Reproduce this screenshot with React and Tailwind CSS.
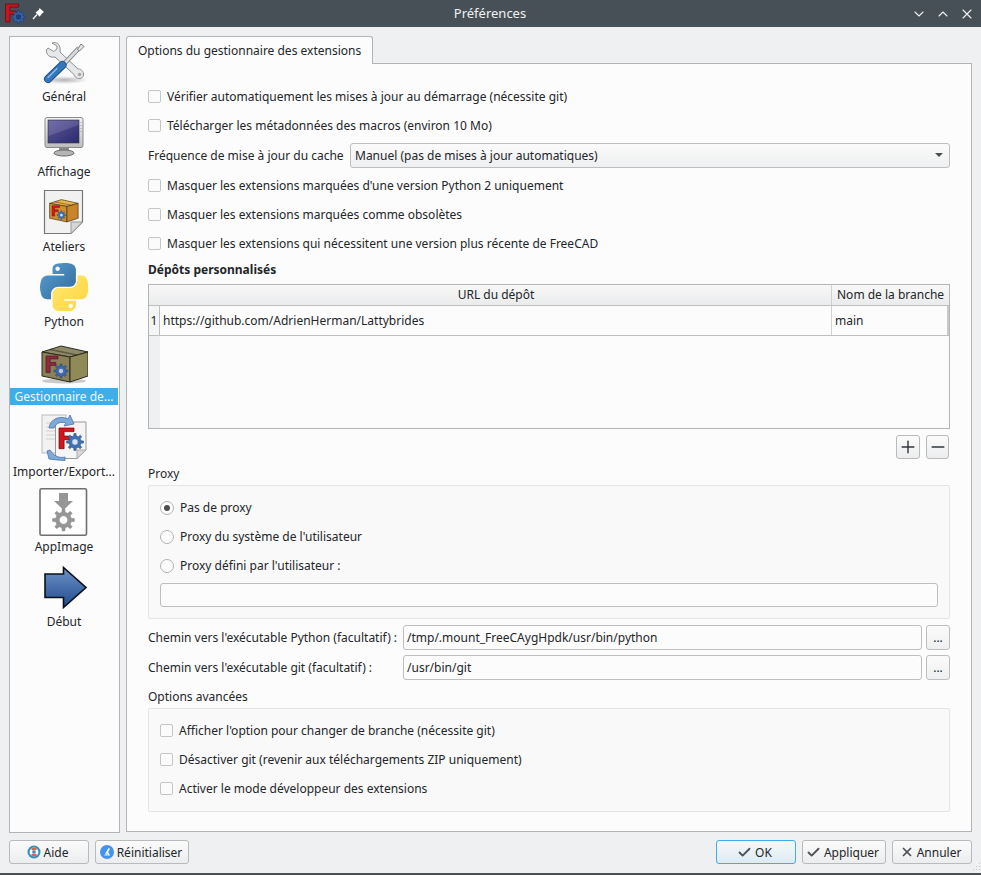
import React from "react"
import { ChevronDown, ChevronUp, X, Check, Plus, Minus } from "lucide-react"

// gear outline, computed so every icon shares the same teeth
function gearPath(cx, cy, outer, inner, teeth) {
  let d = ""
  const step = (Math.PI * 2) / teeth
  for (let i = 0; i < teeth; i++) {
    const a = i * step
    const pts = [
      [inner, a - step * 0.5],
      [inner, a - step * 0.27],
      [outer, a - step * 0.16],
      [outer, a + step * 0.16],
      [inner, a + step * 0.27],
    ]
    pts.forEach(([r, t], j) => {
      const x = (cx + r * Math.cos(t)).toFixed(2)
      const y = (cy + r * Math.sin(t)).toFixed(2)
      d += (i === 0 && j === 0 ? "M" : "L") + x + " " + y + " "
    })
  }
  return d + "Z"
}

function Gear({ cx, cy, r, fill = "#3f73b8", stroke = "#1f3f75", hole = "#d5e2f3" }) {
  return (
    <g>
      <path d={gearPath(cx, cy, r, r * 0.72, 8)} fill={fill} stroke={stroke} strokeWidth="0.5" />
      <circle cx={cx} cy={cy} r={r * 0.38} fill={hole} stroke={stroke} strokeWidth="0.5" />
    </g>
  )
}

function LogoF({ x, y, s, fill = "#d9141e", stroke = "#5a0c10" }) {
  return (
    <path
      d={`M${x} ${y}h${s}v${s * 0.24}h${-s * 0.66}v${s * 0.3}h${s * 0.48}v${s * 0.24}h${-s * 0.48}v${s * 0.6}h${-s * 0.34}z`}
      fill={fill}
      stroke={stroke}
      strokeWidth="0.7"
    />
  )
}

function ToolsIcon() {
  return (
    <svg width="48" height="48" viewBox="0 0 48 48">
      <defs>
        <radialGradient id="toolShadow"><stop offset="0" stopColor="#777" stopOpacity="0.55" /><stop offset="1" stopColor="#777" stopOpacity="0" /></radialGradient>
      </defs>
      <ellipse cx="24" cy="42" rx="24" ry="4" fill="url(#toolShadow)" />
      {/* wrench */}
      <path d="M12 5 L17 8 L17 11 L13.5 13.5 L8 10 L6.5 12 C6 17 10 20 15 19 L34 36.5 C35 42 44 42 43.5 36 C43 32 40 31 38 31 L20 14 C21 8 18 3 12 5Z" fill="#e7e8e9" stroke="#8c8f92" strokeWidth="1" />
      <circle cx="39.5" cy="36.5" r="1.8" fill="#a5a7aa" />
      {/* screwdriver blade */}
      <path d="M24 26 L39 10" stroke="#6f7275" strokeWidth="4.6" />
      <path d="M24 26 L39 10" stroke="#d8dadc" strokeWidth="3" />
      <path d="M37.5 11.5 L41 6 L44 8.5 L39.5 13Z" fill="#e5e6e7" stroke="#6f7275" strokeWidth="0.9" />
      {/* handle */}
      <path d="M8 41 L22.5 27" stroke="#1d4b80" strokeWidth="8" strokeLinecap="round" />
      <path d="M8 41 L22.5 27" stroke="#3577bb" strokeWidth="6.4" strokeLinecap="round" />
      <path d="M8 39.5 L17 30.5" stroke="#8fbfe9" strokeWidth="1.4" strokeLinecap="round" />
    </svg>
  )
}

function MonitorIcon() {
  return (
    <svg width="48" height="48" viewBox="0 0 48 48">
      <defs>
        <linearGradient id="screen" x1="0" y1="0" x2="1" y2="1"><stop offset="0" stopColor="#5c5a9e" /><stop offset="1" stopColor="#2b2a6b" /></linearGradient>
        <linearGradient id="bezel" x1="0" y1="0" x2="0" y2="1"><stop offset="0" stopColor="#f4f4f4" /><stop offset="1" stopColor="#bcbcbc" /></linearGradient>
      </defs>
      <path d="M19 33h10v6H19z" fill="#8c8c8c" />
      <ellipse cx="24" cy="40" rx="10" ry="3" fill="#b5b5b5" stroke="#6c6c6c" />
      <rect x="5" y="4.5" width="38" height="30" rx="2" fill="url(#bezel)" stroke="#8a8a8a" />
      <rect x="8" y="7" width="31" height="23" fill="url(#screen)" stroke="#333" strokeWidth="0.6" />
      <path d="M8.5 7.5H38.5V12L8.5 23Z" fill="#fff" opacity="0.13" />
      <path d="M41 9v1M41 12v1M41 15v1M41 18v1" stroke="#999" />
    </svg>
  )
}

// cardboard crate: wide left face for the logo, narrow right face
function Crate({ left, right, top, line }) {
  return (
    <g stroke={line} strokeLinejoin="round">
      <path d="M1 7 L20 1 L47 7 L29 12Z" fill={top} strokeWidth="1" />
      <path d="M1 7 L29 12 V37 L1 31Z" fill={left} strokeWidth="1" />
      <path d="M29 12 L47 7 V31 L29 37Z" fill={right} strokeWidth="1" />
      <path d="M9 4.5 L36 10" strokeWidth="1.6" opacity="0.5" fill="none" />
    </g>
  )
}

function AteliersIcon() {
  return (
    <svg width="48" height="48" viewBox="0 0 48 48">
      <path d="M4.5 2.5H42.5V34L31 45.5H4.5Z" fill="#f1f1f1" stroke="#777" strokeWidth="1.2" />
      <path d="M31 45.5V34H42.5Z" fill="#d6d6d6" stroke="#999" />
      <g transform="translate(9 11) scale(0.62)">
        <Crate left="#d08e2e" right="#c98427" top="#e9b650" line="#3a2a10" />
        <LogoF x={5} y={11} s={12} />
        <Gear cx={20} cy={26} r={7} />
      </g>
    </svg>
  )
}

function PythonIcon() {
  return (
    <svg width="48" height="48" viewBox="0 0 110 110">
      <defs>
        <linearGradient id="pyBlue" x1="0" y1="0" x2="1" y2="1"><stop offset="0" stopColor="#5a9fd4" /><stop offset="1" stopColor="#306998" /></linearGradient>
        <linearGradient id="pyYellow" x1="0" y1="0" x2="1" y2="1"><stop offset="0" stopColor="#ffe873" /><stop offset="1" stopColor="#ffd43b" /></linearGradient>
      </defs>
      <path fill="url(#pyBlue)" d="M54.919 0c-4.584.022-8.961.413-12.813 1.095C30.76 3.099 28.7 7.295 28.7 15.032v10.219h26.813v3.406H18.638c-7.793 0-14.616 4.684-16.75 13.594-2.462 10.213-2.571 16.586 0 27.25 1.905 7.938 6.457 13.594 14.25 13.594h9.219V71.11c0-8.85 7.657-16.656 16.75-16.656h26.781c7.454 0 13.406-6.138 13.406-13.625V15.032c0-7.266-6.13-12.725-13.406-13.937C64.282.328 59.502-.02 54.918 0zM40.418 8.22c2.77 0 5.031 2.298 5.031 5.125 0 2.816-2.262 5.094-5.031 5.094-2.78 0-5.031-2.278-5.031-5.094 0-2.827 2.251-5.125 5.031-5.125z" />
      <path fill="url(#pyYellow)" d="M85.638 28.657v11.906c0 9.231-7.826 17-16.75 17H42.106c-7.336 0-13.406 6.278-13.406 13.625v25.531c0 7.266 6.319 11.54 13.406 13.625 8.488 2.496 16.627 2.947 26.781 0 6.75-1.954 13.406-5.888 13.406-13.625V86.5H55.513v-3.406H95.7c7.793 0 10.696-5.436 13.406-13.594 2.8-8.399 2.68-16.476 0-27.25-1.926-7.757-5.604-13.594-13.406-13.594zM70.575 93.314c2.78 0 5.031 2.278 5.031 5.094 0 2.827-2.251 5.125-5.031 5.125-2.77 0-5.031-2.298-5.031-5.125 0-2.816 2.261-5.094 5.031-5.094z" />
    </svg>
  )
}

function AddonIcon() {
  return (
    <svg width="48" height="48" viewBox="0 0 48 48">
      <ellipse cx="24" cy="43" rx="22" ry="2.5" fill="#9a9a9a" opacity="0.5" />
      <g transform="translate(1 7)">
        <Crate left="#8a8158" right="#8f8a58" top="#8e8a66" line="#2b2a1c" />
        <LogoF x={5} y={11} s={12} fill="#8d2b3f" stroke="#4a1722" />
        <Gear cx={20} cy={26} r={7} fill="#3a69ad" hole="#b8c9e0" />
      </g>
    </svg>
  )
}

function ImportIcon() {
  return (
    <svg width="48" height="48" viewBox="0 0 48 48">
      <rect x="2" y="2" width="24" height="38" fill="#f2f2f2" stroke="#bbb" />
      <path d="M6 10h14M6 14h14M6 18h14M6 22h10M6 26h10" stroke="#d0d0d0" />
      <path d="M15.5 9H46V37L37 45.5H15.5Z" fill="#f5f5f5" stroke="#999" />
      <path d="M37 45.5V37H46Z" fill="#d9d9d9" stroke="#aaa" />
      <path d="M9 15 C10 6 20 2 28 6 L30 2 L34 11 L24 13 L26 10 C21 8 16 10 14 15Z" fill="#7ea9dc" stroke="#4a74a8" strokeWidth="0.8" />
      <path d="M10 37 C15 45 22 45 25 44 L25 47.5 L17 47 L9 46 L7 38Z" fill="#7ea9dc" stroke="#4a74a8" strokeWidth="0.8" />
      <LogoF x={19} y={15} s={15} fill="#d6141c" stroke="#5d0c10" />
      <Gear cx={35} cy={29} r={8.5} />
    </svg>
  )
}

function AppImageIcon() {
  return (
    <svg width="48" height="48" viewBox="0 0 48 48" className="overflow-visible">
      <rect x="0" y="0.8" width="46.5" height="46.5" rx="1.5" fill="#fff" stroke="#6e6e6e" strokeWidth="1.6" />
      <path d="M19 5h9v8h5l-9.5 9-9.5-9h5z" fill="#969696" />
      <Gear cx={23.5} cy={32} r={11} fill="#969696" stroke="#8a8a8a" hole="#fff" />
    </svg>
  )
}

function ArrowIcon() {
  return (
    <svg width="48" height="48" viewBox="0 0 48 48">
      <defs>
        <linearGradient id="arrowBlue" x1="0" y1="0" x2="0" y2="1"><stop offset="0" stopColor="#6d94c8" /><stop offset="1" stopColor="#1f4a8c" /></linearGradient>
      </defs>
      <path d="M5 11H23.5V4.5L46 24.5L23.5 44.5V34.5H5Z" fill="url(#arrowBlue)" stroke="#0b0f18" strokeWidth="1.6" strokeLinejoin="miter" />
    </svg>
  )
}

const sideItems = [
  { label: "Général", Icon: ToolsIcon },
  { label: "Affichage", Icon: MonitorIcon },
  { label: "Ateliers", Icon: AteliersIcon },
  { label: "Python", Icon: PythonIcon },
  { label: "Gestionnaire de...", Icon: AddonIcon, active: true },
  { label: "Importer/Export...", Icon: ImportIcon },
  { label: "AppImage", Icon: AppImageIcon },
  { label: "Début", Icon: ArrowIcon },
]

function Box({ label, className = "", gap = "gap-[6px]" }) {
  return (
    <div className={`flex items-center ${gap} ${className}`}>
      <span className="w-[13px] h-[13px] shrink-0 rounded-[2px] border border-[#c4c5c6] bg-[#fbfbfb]" />
      <span>{label}</span>
    </div>
  )
}

function Radio({ label, checked }) {
  return (
    <div className="h-[29px] flex items-center gap-[6px]">
      <span className="w-[14px] h-[14px] shrink-0 rounded-full border border-[#b0b2b4] bg-[#fcfcfc] flex items-center justify-center">
        {checked && <span className="w-[6px] h-[6px] rounded-full bg-[#4d4d4d]" />}
      </span>
      <span>{label}</span>
    </div>
  )
}

function Field({ label, value, labelWidth = "w-[255px]" }) {
  return (
    <div className="h-[25px] flex items-center">
      <span className={`${labelWidth} shrink-0`}>{label}</span>
      <div className="w-[519px] h-[25px] shrink-0 px-[3px] flex items-center rounded-[3px] border border-[#bcbebf] bg-[#fcfcfc]">{value}</div>
      <div className="ml-[4px] w-[24px] h-[25px] shrink-0 flex items-center justify-center rounded-[3px] border border-[#bcbebf] bg-linear-to-b from-[#fbfbfb] to-[#eeeff0]">...</div>
    </div>
  )
}

function Btn({ children, className = "" }) {
  return (
    <div className={`h-[24px] flex items-center justify-center gap-[3px] rounded-[3px] border border-[#b8babb] bg-linear-to-b from-[#fbfbfb] to-[#ecedee] ${className}`}>
      {children}
    </div>
  )
}

function HelpDot() {
  return (
    <svg width="14" height="14" viewBox="0 0 14 14">
      <circle cx="7" cy="7" r="6.5" fill="#2f8fbf" />
      <circle cx="7" cy="7" r="4.4" fill="#fff" />
      <path d="M7 2.6A4.4 4.4 0 0 1 10.1 3.9L8.4 5.6A2 2 0 0 0 5.6 5.6L3.9 3.9A4.4 4.4 0 0 1 7 2.6ZM7 11.4A4.4 4.4 0 0 1 3.9 10.1L5.6 8.4A2 2 0 0 0 8.4 8.4L10.1 10.1A4.4 4.4 0 0 1 7 11.4Z" fill="#e2604c" />
      <circle cx="7" cy="7" r="1.8" fill="#2f8fbf" />
    </svg>
  )
}

function ResetDot() {
  return (
    <svg width="14" height="14" viewBox="0 0 14 14">
      <circle cx="7" cy="7" r="7" fill="#4493ee" />
      <path d="M8.5 3 L10 3.8 L8.2 7 L10 10.5 H4.2 L6.4 6.8Z" fill="#fff" />
      <path d="M5 10.5 L6.5 8.3M7.2 10.5L7.8 8.5" stroke="#4493ee" strokeWidth="0.6" />
    </svg>
  )
}

function PinIcon() {
  return (
    <svg width="13" height="13" viewBox="0 0 13 13">
      <path d="M7.5 1 L12 5 L10.5 6 L8.5 8.5 L7.8 9.8 L3.5 5.4 L4.8 4.6 L7 2.8Z" fill="#fcfcfc" />
      <path d="M5 7.5 L1 12" stroke="#fcfcfc" strokeWidth="1.3" />
    </svg>
  )
}

export default function App() {
  return (
    <div className="relative w-[981px] h-[875px] flex flex-col overflow-hidden bg-[#eff0f1] text-[12px] leading-[17px] text-[#232629] font-['Noto_Sans',sans-serif]">
      {/* title bar */}
      <div className="h-[27px] shrink-0 flex items-center bg-[#475057] text-[#eff0f1]">
        <svg width="24" height="24" viewBox="0 0 24 24" className="ml-[3px] shrink-0">
          <LogoF x={2.5} y={2} s={13} fill="#c8141c" stroke="#5a0c10" />
          <Gear cx={15.5} cy={15} r={6.5} fill="#3565ad" stroke="#1b3466" hole="#223f78" />
        </svg>
        <span className="ml-[5px]"><PinIcon /></span>
        <span className="flex-1 text-center pl-[24px] text-[13px]">Préférences</span>
        <div className="flex items-center gap-[8px] pr-[6px]">
          <ChevronDown size={16} strokeWidth={1.6} />
          <ChevronUp size={16} strokeWidth={1.6} />
          <X size={16} strokeWidth={1.6} />
        </div>
      </div>

      <div className="flex-1 flex flex-col px-[9px] pt-[9px]">
        <div className="h-[797px] flex gap-[6px]">
          {/* category list */}
          <div className="w-[111px] h-[797px] shrink-0 border border-[#b2b4b5] bg-[#fcfcfc] pt-[1px]">
            {sideItems.map((item) => (
              <div key={item.label} className="h-[75px] w-[108px] flex flex-col">
                <div className="w-[48px] h-[48px] shrink-0 ml-[30px]"><item.Icon /></div>
                <div className={`h-[17px] w-full mt-[2px] text-center whitespace-nowrap overflow-hidden ${item.active ? "bg-[#3daee9] text-[#eafaff]" : ""}`}>
                  {item.label}
                </div>
              </div>
            ))}
          </div>

          {/* tab + page */}
          <div className="w-[846px] flex flex-col">
            <div className="h-[28px] w-[247px] shrink-0 z-10 -mb-px rounded-t-[3px] border border-b-0 border-[#b2b4b5] bg-[#fcfcfc] flex items-center pl-[11px]">
              Options du gestionnaire des extensions
            </div>
            <div className="h-[769px] border border-[#b2b4b5] bg-[#fcfcfc] pt-[18px] pl-[21px] pr-[21px]">
              <Box label="Vérifier automatiquement les mises à jour au démarrage (nécessite git)" className="h-[29px]" />
              <Box label="Télécharger les métadonnées des macros (environ 10 Mo)" className="h-[29px]" />
              <div className="h-[30px] flex items-center">
                <span className="w-[202px] shrink-0">Fréquence de mise à jour du cache</span>
                <div className="flex-1 h-[25px] flex items-center justify-between px-[4px] rounded-[3px] border border-[#bcbebf] bg-linear-to-b from-[#fbfbfb] to-[#eeeff0]">
                  <span>Manuel (pas de mises à jour automatiques)</span>
                  <span className="mr-[2px] w-0 h-0 border-x-[4px] border-x-transparent border-t-[4px] border-t-[#4d4d4d]" />
                </div>
              </div>
              <Box label="Masquer les extensions marquées d'une version Python 2 uniquement" className="h-[30px]" />
              <Box label="Masquer les extensions marquées comme obsolètes" className="h-[29px]" />
              <Box label="Masquer les extensions qui nécessitent une version plus récente de FreeCAD" className="h-[29px]" />
              <div className="h-[22px] flex items-center font-bold">Dépôts personnalisés</div>

              {/* repositories table */}
              <div className="mt-[4px] h-[145px] border border-[#b2b4b5] flex flex-col">
                <div className="h-[21px] shrink-0 flex border-b border-[#bcbebf] bg-linear-to-b from-[#f8f8f8] to-[#eaebec]">
                  <div className="w-[683px] shrink-0 text-center border-r border-[#d0d1d2] pt-[1px] pl-[12px]">URL du dépôt</div>
                  <div className="flex-1 pl-[5px] pt-[1px] whitespace-nowrap">Nom de la branche</div>
                </div>
                <div className="h-[30px] shrink-0 flex items-center border-b border-[#bcbebf]">
                  <div className="w-[11px] h-full shrink-0 flex items-center justify-center border-r border-[#bcbebf] bg-[#f4f5f5]">1</div>
                  <div className="w-[672px] h-full shrink-0 flex items-center pl-[3px] border-r border-[#d0d1d2]">https://github.com/AdrienHerman/Lattybrides</div>
                  <div className="flex-1 h-full flex items-center pl-[3px] border-r-2 border-[#c8c9ca]">main</div>
                </div>
                <div className="flex-1 flex">
                  <div className="w-[11px] shrink-0 bg-[#eff0f1]" />
                </div>
              </div>
              <div className="mt-[6px] h-[24px] flex justify-end gap-[6px] pr-[1px]">
                <Btn className="w-[24px] h-[23px]"><Plus size={20} strokeWidth={1.7} color="#31363b" /></Btn>
                <Btn className="w-[23px] h-[23px]"><Minus size={20} strokeWidth={1.7} color="#31363b" /></Btn>
              </div>

              <div className="mt-[4px] h-[21px] flex items-center">Proxy</div>
              <div className="mt-[1px] h-[134px] w-[802px] rounded-[2px] border border-[#e3e4e5] bg-[#f9f9f9] px-[11px] pt-[7px]">
                <Radio label="Pas de proxy" checked />
                <Radio label="Proxy du système de l'utilisateur" />
                <Radio label="Proxy défini par l'utilisateur :" />
                <div className="mt-[3px] h-[24px] rounded-[3px] border border-[#bcbebf] bg-[#fcfcfc]" />
              </div>

              <div className="mt-[6px] flex flex-col gap-[5px]">
                <Field label="Chemin vers l'exécutable Python (facultatif) :" value="/tmp/.mount_FreeCAygHpdk/usr/bin/python" />
                <Field label="Chemin vers l'exécutable git (facultatif) :" value="/usr/bin/git" />
              </div>

              <div className="mt-[6px] h-[21px] flex items-center">Options avancées</div>
              <div className="mt-[1px] h-[104px] w-[802px] rounded-[2px] border border-[#e3e4e5] bg-[#f9f9f9] px-[11px] pt-[7px]">
                <Box label="Afficher l'option pour changer de branche (nécessite git)" className="h-[29px]" />
                <Box label="Désactiver git (revenir aux téléchargements ZIP uniquement)" className="h-[29px]" />
                <Box label="Activer le mode développeur des extensions" className="h-[29px]" />
              </div>
            </div>
          </div>
        </div>

        {/* dialog buttons */}
        <div className="mt-[7px] h-[24px] flex items-center">
          <Btn className="w-[80px] pr-[3px]"><HelpDot /><span>Aide</span></Btn>
          <Btn className="ml-[6px] w-[94px] pr-[2px]"><ResetDot /><span>Réinitialiser</span></Btn>
          <div className="flex-1" />
          <div className="h-[24px] w-[80px] pr-[3px] flex items-center justify-center gap-[3px] rounded-[3px] border border-[#3daee9] bg-linear-to-b from-[#f4fafd] to-[#dfeaf0]">
            <Check size={15} strokeWidth={3} color="#4d5256" /><span>OK</span>
          </div>
          <Btn className="ml-[6px] w-[84px] pr-[3px]"><Check size={15} strokeWidth={3} color="#4d5256" /><span>Appliquer</span></Btn>
          <Btn className="ml-[6px] w-[80px] pr-[3px]"><X size={14} strokeWidth={3} color="#4d5256" /><span>Annuler</span></Btn>
        </div>
      </div>
      <div className="h-[2px] shrink-0 bg-[#475057]" />
      {/* resize grip */}
      <svg width="10" height="10" viewBox="0 0 10 10" className="absolute right-[0px] bottom-[3px]">
        <path d="M8 1h1v1H8zM5 4h1v1H5zM8 4h1v1H8zM2 7h1v1H2zM5 7h1v1H5zM8 7h1v1H8z" fill="#c4c6c7" />
      </svg>
    </div>
  )
}
